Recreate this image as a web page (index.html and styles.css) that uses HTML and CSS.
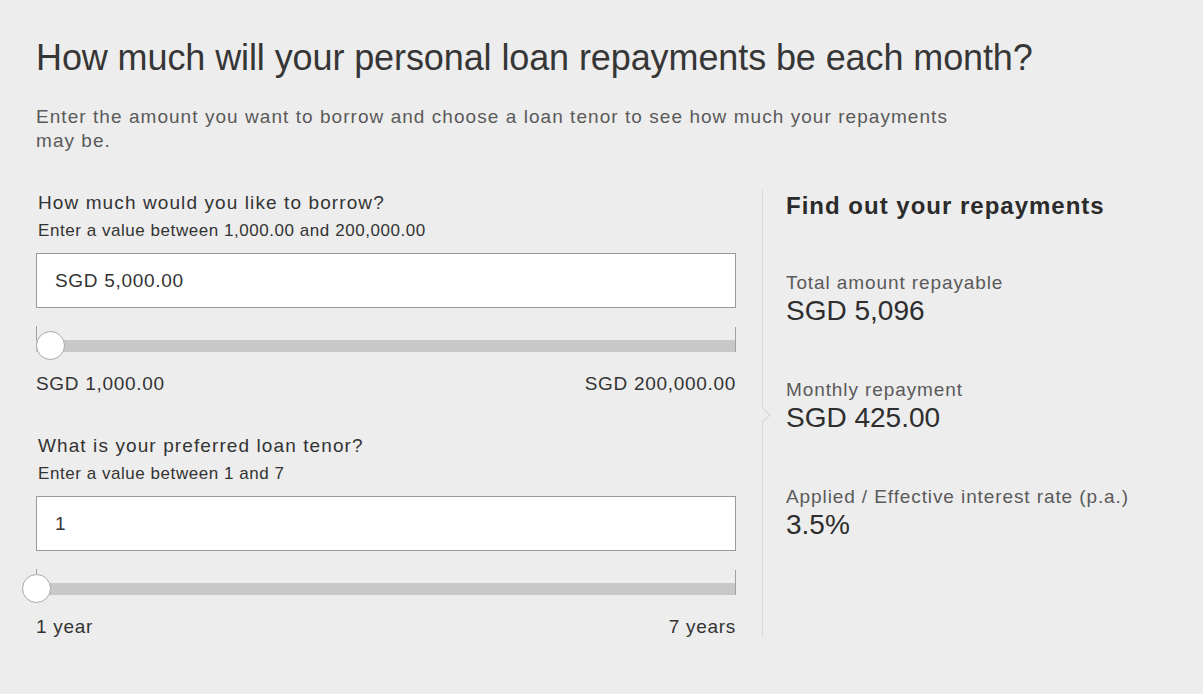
FILE: index.html
```html
<!DOCTYPE html>
<html lang="en">
<head>
<meta charset="utf-8">
<title>Personal loan calculator</title>
<link rel="stylesheet" href="styles.css">
</head>
<body>
<main class="page">
  <h1 class="title">How much will your personal loan repayments be each month?</h1>
  <p class="intro">Enter the amount you want to borrow and choose a loan tenor to see how much your repayments may be.</p>

  <div class="calc">
    <section class="inputs">
      <div class="field">
        <label class="label">How much would you like to borrow?</label>
        <div class="hint">Enter a value between 1,000.00 and 200,000.00</div>
        <div class="box">SGD 5,000.00</div>
        <div class="slider">
          <span class="tick tick-start"></span>
          <span class="track"></span>
          <span class="tick tick-end"></span>
          <span class="thumb" style="left: 14px"></span>
        </div>
        <div class="range"><span>SGD 1,000.00</span><span>SGD 200,000.00</span></div>
      </div>

      <div class="field">
        <label class="label">What is your preferred loan tenor?</label>
        <div class="hint">Enter a value between 1 and 7</div>
        <div class="box">1</div>
        <div class="slider">
          <span class="tick tick-start"></span>
          <span class="track"></span>
          <span class="tick tick-end"></span>
          <span class="thumb" style="left: 0px"></span>
        </div>
        <div class="range"><span>1 year</span><span>7 years</span></div>
      </div>
    </section>

    <aside class="results">
      <span class="notch"></span>
      <h2 class="results-title">Find out your repayments</h2>
      <div class="result">
        <div class="result-label">Total amount repayable</div>
        <div class="result-value">SGD 5,096</div>
      </div>
      <div class="result">
        <div class="result-label">Monthly repayment</div>
        <div class="result-value">SGD 425.00</div>
      </div>
      <div class="result">
        <div class="result-label">Applied / Effective interest rate (p.a.)</div>
        <div class="result-value">3.5%</div>
      </div>
    </aside>
  </div>
</main>
</body>
</html>
```

FILE: styles.css
```css
html, body {
  margin: 0;
  padding: 0;
  background: #ededed;
}

body {
  font-family: "Liberation Sans", Arial, sans-serif;
  color: #333333;
}

.page {
  padding: 36px 0 0 36px;
}

.title {
  margin: 0;
  font-size: 36px;
  font-weight: normal;
  line-height: 44px;
  letter-spacing: -0.1px;
  color: #363636;
}

.intro {
  margin: 25px 0 0 0;
  max-width: 930px;
  font-size: 19px;
  line-height: 24px;
  letter-spacing: 1.05px;
  color: #5a5a5a;
}

.calc {
  display: flex;
  margin-top: 37px;
}

.inputs {
  width: 700px;
  padding-top: 1px;
}

.field {
  display: flex;
  flex-direction: column;
}

.field + .field {
  margin-top: 38px;
}

.label {
  padding-left: 2px;
  font-size: 19px;
  line-height: 24px;
  letter-spacing: 1.1px;
  color: #333333;
}

.hint {
  padding-left: 2px;
  margin-top: 6px;
  font-size: 17px;
  line-height: 20px;
  letter-spacing: 0.55px;
  color: #333333;
}

.box {
  margin-top: 12px;
  height: 53px;
  border: 1px solid #9a9a9a;
  background: #ffffff;
  padding-left: 18px;
  font-size: 19px;
  line-height: 53px;
  letter-spacing: 0.7px;
  color: #333333;
}

.slider {
  position: relative;
  height: 64px;
}

.track {
  position: absolute;
  left: 0;
  right: 0;
  top: 32px;
  height: 12px;
  background: #c8c8c8;
}

.tick {
  position: absolute;
  width: 1px;
  background: #a0a0a0;
}

.tick-start {
  left: 0;
  top: 18px;
  height: 14px;
}

.tick-end {
  right: 0;
  top: 19px;
  height: 25px;
}

.thumb {
  position: absolute;
  top: 23px;
  margin-left: -14px;
  width: 27px;
  height: 27px;
  border: 1px solid #a8a8a8;
  border-radius: 50%;
  background: #ffffff;
}

.range {
  display: flex;
  justify-content: space-between;
  font-size: 19px;
  line-height: 24px;
  letter-spacing: 0.7px;
  color: #333333;
}

.results {
  position: relative;
  margin-left: 26px;
  border-left: 1px solid #d8d8d8;
  padding-left: 23px;
  height: 447px;
}

.notch {
  position: absolute;
  left: -7px;
  top: 219px;
  width: 11px;
  height: 11px;
  background: #ededed;
  border-top: 1px solid #d6d6d6;
  border-right: 1px solid #d6d6d6;
  transform: rotate(45deg);
}

.results-title {
  margin: 2px 0 0 0;
  font-size: 24px;
  line-height: 28px;
  font-weight: bold;
  letter-spacing: 1px;
  color: #2b2b2b;
}

.result {
  margin-top: 52px;
}

.result + .result {
  margin-top: 53px;
}

.result-label {
  font-size: 19px;
  line-height: 22px;
  letter-spacing: 0.9px;
  color: #5a5a5a;
}

.result-value {
  margin-top: 2px;
  font-size: 28px;
  line-height: 30px;
  color: #2e2e2e;
}
```
